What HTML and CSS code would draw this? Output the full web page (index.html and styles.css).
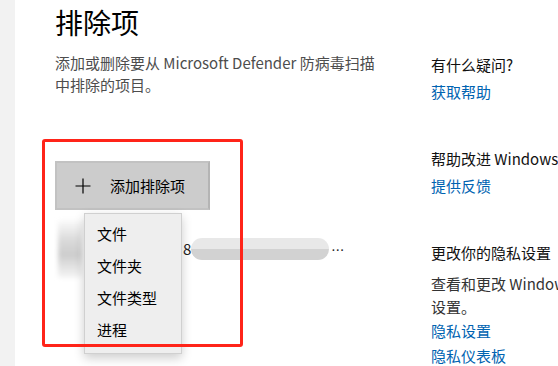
FILE: index.html
```html
<!DOCTYPE html>
<html lang="zh-CN">
<head>
    <meta charset="UTF-8">
    <meta name="viewport" content="width=device-width, initial-scale=1.0">
    <title>排除项</title>
    <link rel="stylesheet" href="styles.css">
</head>
<body>
    <div class="page">
        <div class="nav-strip"></div>

        <main class="main">
            <h1>排除项</h1>
            <p class="desc">添加或删除要从 Microsoft Defender 防病毒扫描中排除的项目。</p>

            <div class="exclusions">
                <button class="add-btn">
                    <svg class="plus" width="16" height="16" viewBox="0 0 16 16">
                        <path d="M8 0.5V15.5M0.5 8H15.5" stroke="#000" stroke-width="1.2" fill="none"/>
                    </svg>
                    <span>添加排除项</span>
                </button>

                <!-- 已模糊处理的排除项 -->
                <div class="item-row">
                    <div class="item-icon"></div>
                    <div class="item-text">
                        <span class="item-gap"></span>
                        <span class="digit">8</span>
                        <span class="blur-pill"></span>
                        <span class="dots">…</span>
                    </div>
                </div>

                <ul class="dropdown">
                    <li>文件</li>
                    <li>文件夹</li>
                    <li>文件类型</li>
                    <li>进程</li>
                </ul>

                <div class="mark-box"></div>
            </div>
        </main>

        <aside class="side">
            <section class="side-group">
                <h3>有什么疑问?</h3>
                <a href="#">获取帮助</a>
            </section>
            <section class="side-group">
                <h3>帮助改进 Windows 安全中心</h3>
                <a href="#">提供反馈</a>
            </section>
            <section class="side-group">
                <h3>更改你的隐私设置</h3>
                <p>查看和更改 Windows 10 设备的隐私设置。</p>
                <a href="#">隐私设置</a>
                <a href="#">隐私仪表板</a>
            </section>
        </aside>
    </div>
</body>
</html>
```

FILE: styles.css
```css
:root {
    --link: #0063b1;
    --mark: #ff2419;
}

* {
    box-sizing: border-box;
}

body {
    margin: 0;
    background: white;
    font-family: 'Noto Sans CJK SC', 'Noto Sans', sans-serif;
    color: #000;
    overflow: hidden;
}

.page {
    display: flex;
    height: 366px;
}

.nav-strip {
    width: 15px;
    flex-shrink: 0;
    background: #f2f2f2;
}

.main {
    width: 416px;
    flex-shrink: 0;
    padding-left: 40px;
}

h1 {
    margin: 4px 0 0;
    font-size: 28px;
    font-weight: normal;
    line-height: 36px;
}

.desc {
    width: 330px;
    margin: 12px 0 0;
    font-size: 15px;
    line-height: 22px;
    color: #4d4d4d;
}

.exclusions {
    position: relative;
    margin-top: 65px;
}

.add-btn {
    display: flex;
    align-items: center;
    width: 155px;
    height: 49px;
    padding: 0 0 0 18px;
    background: #cccccc;
    border: 2px solid #c2c2c2;
    border-right-color: #b4b4b4;
    font-family: inherit;
    font-size: 15px;
    color: #000;
}

.plus {
    margin-right: 19px;
}

.item-row {
    display: flex;
    align-items: center;
    height: 62px;
    margin-top: 8px;
}

.item-icon {
    width: 24px;
    height: 58px;
    margin-left: 3px;
    background: linear-gradient(#fbfbfb, #dadada 35%, #cdcdcd 60%, #f6f6f6);
    filter: blur(2px);
}

.item-text {
    display: flex;
    align-items: center;
    font-size: 15px;
    color: #222;
}

.item-gap {
    width: 101px;
}

.digit {
    line-height: 20px;
}

.blur-pill {
    width: 138px;
    height: 22px;
    border-radius: 11px;
    background: linear-gradient(#e8e8e8 50%, #d2d2d2 50%);
}

.dots {
    margin-left: 2px;
    font-size: 13px;
}

.dropdown {
    position: absolute;
    left: 29px;
    top: 52px;
    width: 98px;
    margin: 0;
    padding: 4px 0 7px;
    list-style: none;
    background: #eeeeee;
    border: 1px solid #d0d0d0;
    box-shadow: 0 4px 10px rgba(0,0,0,0.2);
}

.dropdown li {
    height: 32px;
    padding-left: 12px;
    font-size: 15px;
    line-height: 32px;
}

.mark-box {
    position: absolute;
    left: -13px;
    top: -22px;
    width: 201px;
    height: 208px;
    border: 3px solid var(--mark);
    border-radius: 3px;
    pointer-events: none;
}

.side {
    width: 250px;
    flex-shrink: 0;
    padding-top: 55px;
    font-size: 15px;
}

.side-group {
    margin-bottom: 47px;
}

.side-group h3 {
    margin: 0;
    font-size: 15px;
    font-weight: normal;
    line-height: 20px;
    color: #111;
    white-space: nowrap;
}

.side-group p {
    margin: 9px 0 0;
    line-height: 23px;
    color: #333;
}

.side-group a {
    display: block;
    margin-top: 7px;
    line-height: 20px;
    color: var(--link);
    text-decoration: none;
}

.side-group p + a {
    margin-top: 3px;
}

.side-group a + a {
    margin-top: 5px;
}
```
